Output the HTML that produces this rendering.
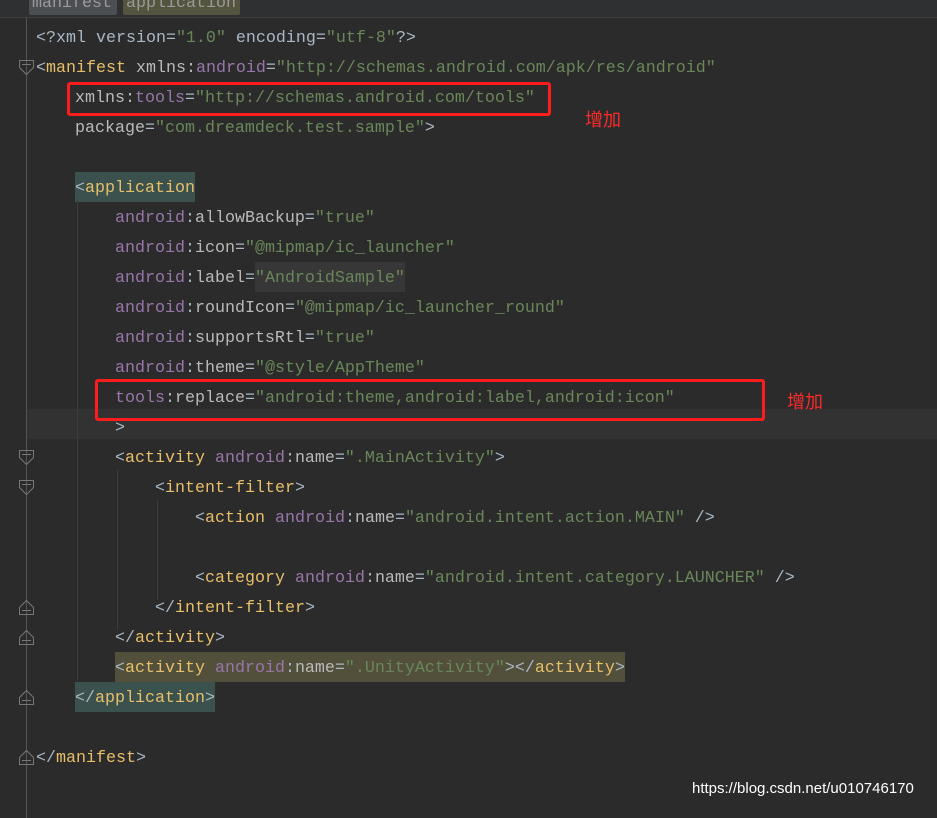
<!DOCTYPE html>
<html><head><meta charset="utf-8"><style>
body{margin:0;width:937px;height:809px;background:#2b2b2b;overflow:hidden;position:relative;font-family:"Liberation Mono",monospace;}
.top{position:absolute;left:0;top:0;width:937px;height:17px;background:#2f3031;border-bottom:1px solid #3c3f41;}
.tab{position:absolute;top:-5px;height:20px;font-size:16.67px;line-height:18px;padding:0 3px;border-radius:2px;color:#9a9a9a}
.gl{position:absolute;left:26px;top:18px;width:1px;height:800px;background:#555}
.cur{position:absolute;left:27px;top:409px;width:910px;height:30px;background:#323232}
.ln{position:absolute;left:0;height:30px;line-height:30px;font-size:16.67px;white-space:pre;color:#a9b7c6;margin-top:2px}
.t{color:#e8bf6a}.a{color:#bababa}.n{color:#9876aa}.s{color:#6a8759}
.hl{position:absolute;height:30px}
.red{position:absolute;border:3px solid #ff1c1c;border-radius:3px}
.zj{position:absolute;color:#ff2a2a;font-family:"Noto Sans CJK SC",sans-serif;font-size:18px}
.ig{position:absolute;width:1px;background:#3d3d3d}
</style></head><body>
<div class="top"></div>
<div class="tab" style="left:29px;width:82px;background:#4b4f53">manifest</div>
<div class="tab" style="left:123px;width:111px;background:#55553f">application</div>
<div class="gl"></div>
<div class="cur"></div>
<div class="hl" style="left:75px;top:172px;width:120px;background:#3b514d"></div>
<div class="hl" style="left:75px;top:682px;width:140px;background:#3b514d"></div>
<div class="hl" style="left:115px;top:652px;width:510px;background:#52503a"></div>
<div class="hl" style="left:255px;top:262px;width:150px;background:#373737"></div>
<div class="ig" style="left:77px;top:200px;height:480px"></div>
<div class="ig" style="left:117px;top:470px;height:160px"></div>
<div class="ig" style="left:157px;top:500px;height:100px"></div>
<svg style="position:absolute;left:0;top:0" width="40" height="809" fill="none" stroke="#777" stroke-width="1">
<path d="M19.5 60.5h14v7l-7 7l-7-7z M22 64.5h9"/>
<path d="M19.5 450.5h14v7l-7 7l-7-7z M22 454.5h9"/>
<path d="M19.5 480.5h14v7l-7 7l-7-7z M22 484.5h9"/>
<path d="M19.5 614.5h14v-7l-7-7l-7 7z M22 610.5h9"/>
<path d="M19.5 644.5h14v-7l-7-7l-7 7z M22 640.5h9"/>
<path d="M19.5 704.5h14v-7l-7-7l-7 7z M22 700.5h9"/>
<path d="M19.5 764.5h14v-7l-7-7l-7 7z M22 760.5h9"/>
</svg>
<div class="ln" style="top:22px;left:36px">&lt;?xml version=<span class="s">"1.0"</span> encoding=<span class="s">"utf-8"</span>?&gt;</div>
<div class="ln" style="top:52px;left:36px">&lt;<span class="t">manifest</span> <span class="a">xmlns:</span><span class="n">android</span>=<span class="s">"http://schemas.android.com/apk/res/android"</span></div>
<div class="ln" style="top:82px;left:75px"><span class="a">xmlns:</span><span class="n">tools</span>=<span class="s">"http://schemas.android.com/tools"</span></div>
<div class="ln" style="top:112px;left:75px"><span class="a">package</span>=<span class="s">"com.dreamdeck.test.sample"</span>&gt;</div>
<div class="ln" style="top:172px;left:75px">&lt;<span class="t">application</span></div>
<div class="ln" style="top:202px;left:115px"><span class="n">android</span>:<span class="a">allowBackup</span>=<span class="s">"true"</span></div>
<div class="ln" style="top:232px;left:115px"><span class="n">android</span>:<span class="a">icon</span>=<span class="s">"@mipmap/ic_launcher"</span></div>
<div class="ln" style="top:262px;left:115px"><span class="n">android</span>:<span class="a">label</span>=<span class="s">"AndroidSample"</span></div>
<div class="ln" style="top:292px;left:115px"><span class="n">android</span>:<span class="a">roundIcon</span>=<span class="s">"@mipmap/ic_launcher_round"</span></div>
<div class="ln" style="top:322px;left:115px"><span class="n">android</span>:<span class="a">supportsRtl</span>=<span class="s">"true"</span></div>
<div class="ln" style="top:352px;left:115px"><span class="n">android</span>:<span class="a">theme</span>=<span class="s">"@style/AppTheme"</span></div>
<div class="ln" style="top:382px;left:115px"><span class="n">tools</span>:<span class="a">replace</span>=<span class="s">"android:theme,android:label,android:icon"</span></div>
<div class="ln" style="top:412px;left:115px">&gt;</div>
<div class="ln" style="top:442px;left:115px">&lt;<span class="t">activity</span> <span class="n">android</span>:<span class="a">name</span>=<span class="s">".MainActivity"</span>&gt;</div>
<div class="ln" style="top:472px;left:155px">&lt;<span class="t">intent-filter</span>&gt;</div>
<div class="ln" style="top:502px;left:195px">&lt;<span class="t">action</span> <span class="n">android</span>:<span class="a">name</span>=<span class="s">"android.intent.action.MAIN"</span> /&gt;</div>
<div class="ln" style="top:562px;left:195px">&lt;<span class="t">category</span> <span class="n">android</span>:<span class="a">name</span>=<span class="s">"android.intent.category.LAUNCHER"</span> /&gt;</div>
<div class="ln" style="top:592px;left:155px">&lt;/<span class="t">intent-filter</span>&gt;</div>
<div class="ln" style="top:622px;left:115px">&lt;/<span class="t">activity</span>&gt;</div>
<div class="ln" style="top:652px;left:115px">&lt;<span class="t">activity</span> <span class="n">android</span>:<span class="a">name</span>=<span class="s">".UnityActivity"</span>&gt;&lt;/<span class="t">activity</span>&gt;</div>
<div class="ln" style="top:682px;left:75px">&lt;/<span class="t">application</span>&gt;</div>
<div class="ln" style="top:742px;left:36px">&lt;/<span class="t">manifest</span>&gt;</div>
<div class="red" style="left:67px;top:82px;width:478px;height:28px"></div>
<div class="red" style="left:95px;top:379px;width:664px;height:36px"></div>
<div class="zj" style="left:585px;top:106px">增加</div>
<div class="zj" style="left:787px;top:388px">增加</div>
<div style="position:absolute;left:692px;top:780px;color:#fff;font-family:'Liberation Sans',sans-serif;font-size:15px">https://blog.csdn.net/u010746170</div>
</body></html>
